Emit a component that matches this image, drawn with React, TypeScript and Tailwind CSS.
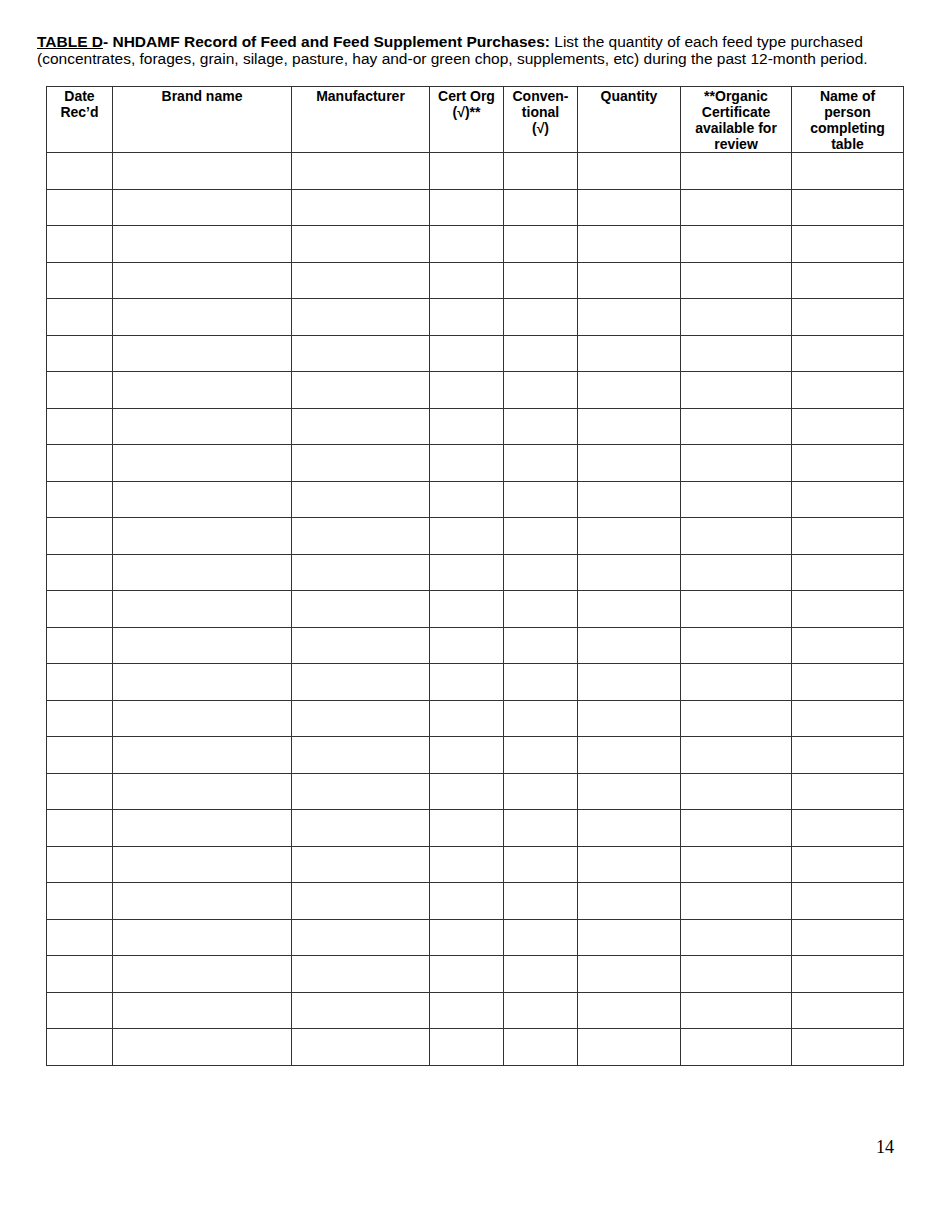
import React from "react";

const cols = [66, 179, 138, 74, 74, 103, 111, 112];
const headers: React.ReactNode[] = [
  <>Date<br />Rec’d</>,
  <>Brand name</>,
  <>Manufacturer</>,
  <>Cert Org<br />(√)**</>,
  <>Conven-<br />tional<br />(√)</>,
  <>Quantity</>,
  <>**Organic<br />Certificate<br />available for<br />review</>,
  <>Name of<br />person<br />completing<br />table</>,
];

export default function App() {
  const rows = Array.from({ length: 25 });
  return (
    <div className="relative w-[950px] h-[1230px] bg-white text-black" style={{ fontFamily: '"Liberation Sans", Arial, sans-serif' }}>
      <div className="pt-[33px] pl-[37px] pr-[20px] text-[15.5px] leading-[17px] whitespace-nowrap">
        <p>
          <span className="font-bold"><span className="underline">TABLE D</span>- NHDAMF Record of Feed and Feed Supplement Purchases:</span> List the quantity of each feed type purchased
          <br />
          (concentrates, forages, grain, silage, pasture, hay and-or green chop, supplements, etc) during the past 12-month period.
        </p>
      </div>
      <div className="pl-[46px] pt-[19px]">
        <table className="border-collapse table-fixed w-[858px]">
          <colgroup>
            {cols.map((w, i) => (
              <col key={i} style={{ width: w }} />
            ))}
          </colgroup>
          <thead>
            <tr>
              {headers.map((h, i) => (
                <th key={i} className="border border-[#333] h-[65px] align-top text-center font-bold text-[14px] leading-[16px] pt-[1px] px-0">
                  {h}
                </th>
              ))}
            </tr>
          </thead>
          <tbody>
            {rows.map((_, r) => (
              <tr key={r}>
                {cols.map((_, c) => (
                  <td key={c} className="border border-[#333] h-[36.5px] p-0"></td>
                ))}
              </tr>
            ))}
          </tbody>
        </table>
      </div>
      <div className="absolute left-[876px] top-[1137px] text-[18px] leading-[20px]" style={{ fontFamily: '"Liberation Serif", "Times New Roman", serif' }}>
        14
      </div>
    </div>
  );
}
